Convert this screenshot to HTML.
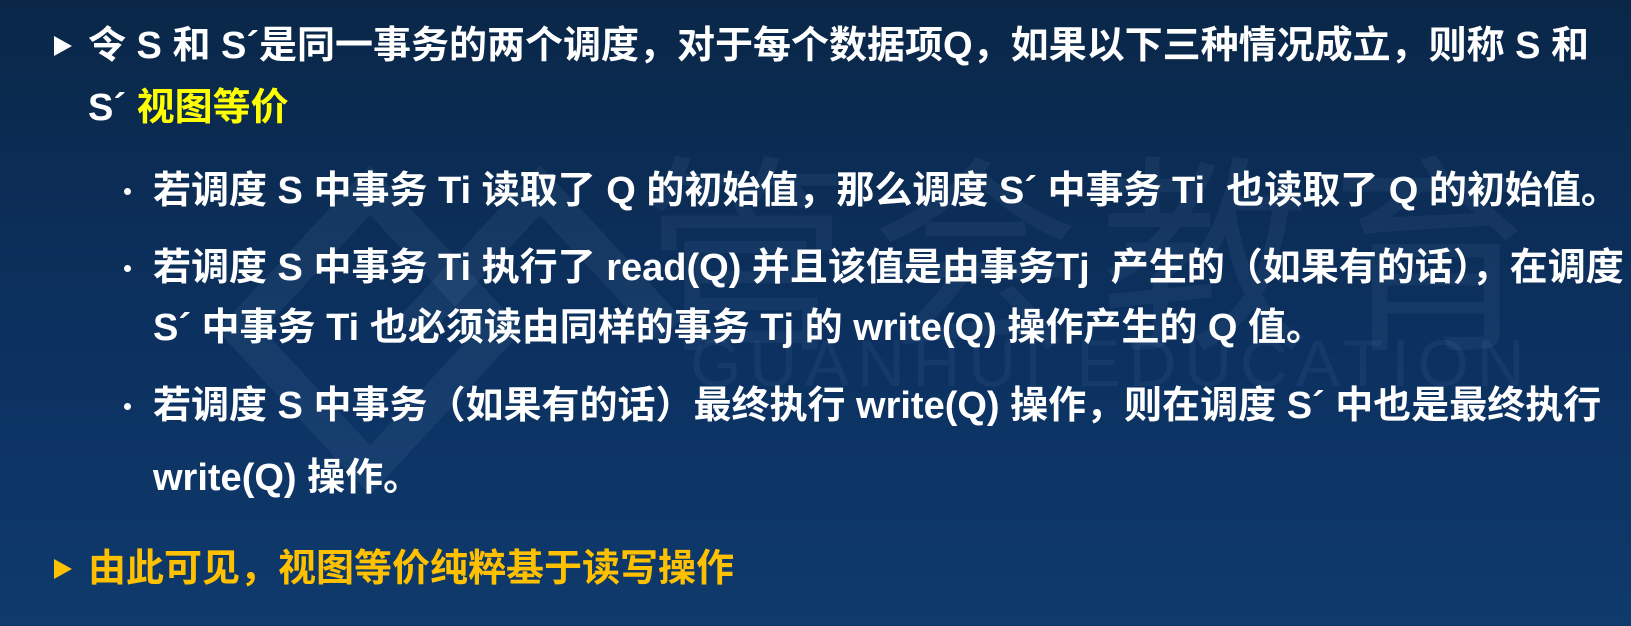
<!DOCTYPE html>
<html><head><meta charset="utf-8"><style>
html,body{margin:0;padding:0}
body{width:1631px;height:626px;overflow:hidden;position:relative;
background:linear-gradient(180deg,#0a2748 0%,#0c3160 55%,#0e3a6c 100%);
font-family:"Liberation Sans","Noto Sans CJK SC",sans-serif;font-weight:bold;color:#fff;}
.l{position:absolute;white-space:nowrap;font-size:38px;line-height:44px;}
.wm{position:absolute;color:rgba(120,160,200,0.09);white-space:nowrap;font-weight:normal}
.arr{position:absolute;width:0;height:0;border-top:10px solid transparent;border-bottom:10px solid transparent;}
.dot{position:absolute;width:7px;height:7px;border-radius:50%;background:#fff}
</style></head><body>
<svg style="position:absolute;left:200px;top:80px" width="560" height="460" viewBox="0 0 560 460">
<g fill="none" stroke="rgba(120,160,200,0.1)" stroke-width="34">
<path d="M40 250 L170 110 L300 250 L170 390 Z"/>
<path d="M210 250 L340 110 L470 250"/>
</g></svg>
<div class="wm" style="left:640px;top:90px;font-size:210px;letter-spacing:20px">管会教育</div>
<div class="wm" style="left:690px;top:325px;font-size:66px;letter-spacing:8px">GUANHUI EDUCATION</div>

<div class="arr" style="left:54px;top:36px;border-left:18px solid #fff"></div>
<div class="l" style="left:88px;top:24px">令 S 和 S´是同一事务的两个调度，对于每个数据项Q，如果以下三种情况成立，则称 S 和</div>
<div class="l" style="left:88px;top:86px">S´ <span style="color:#ffff00">视图等价</span></div>

<div class="dot" style="left:124px;top:188px"></div>
<div class="l" style="left:153px;top:169px">若调度 S 中事务 Ti 读取了 Q 的初始值，那么调度 S´ 中事务 Ti &nbsp;也读取了 Q 的初始值。</div>
<div class="dot" style="left:124px;top:265px"></div>
<div class="l" style="left:153px;top:246px">若调度 S 中事务 Ti 执行了 read(Q) 并且该值是由事务Tj &nbsp;产生的（如果有的话），在调度</div>
<div class="l" style="left:153px;top:306px">S´ 中事务 Ti 也必须读由同样的事务 Tj 的 write(Q) 操作产生的 Q 值。</div>
<div class="dot" style="left:124px;top:403px"></div>
<div class="l" style="left:153px;top:384px">若调度 S 中事务（如果有的话）最终执行 write(Q) 操作，则在调度 S´ 中也是最终执行</div>
<div class="l" style="left:153px;top:456px">write(Q) 操作。</div>

<div class="arr" style="left:54px;top:559px;border-left:18px solid #ffc000"></div>
<div class="l" style="left:88px;top:547px;color:#ffc000">由此可见，视图等价纯粹基于读写操作</div>
</body></html>
